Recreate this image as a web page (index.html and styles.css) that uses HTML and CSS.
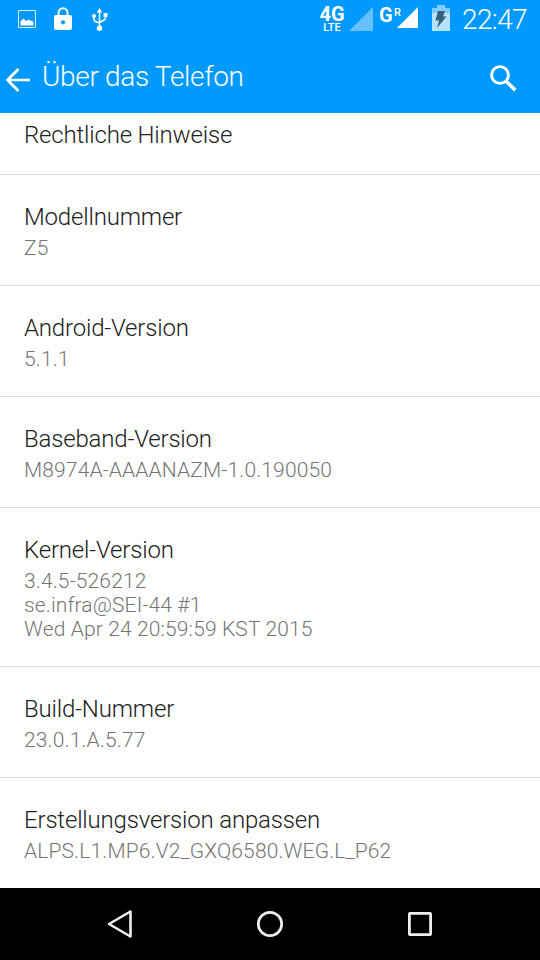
FILE: index.html
```html
<!doctype html>
<html lang="de">
<head>
<meta charset="utf-8">
<title>Über das Telefon</title>
<link rel="stylesheet" href="styles.css">
</head>

<body>
<div class="phone">
    <div class="status">
        <svg class="st-pic" width="18" height="18" viewBox="0 0 18 18">
            <path d="M.5.5h17v17H.5z" fill="none" stroke="#d9f0ff"/>
            <path d="M2.500 15.500v-4L5.500 8.500l2.500 2.500 3-1.500 1.500 1.500 1.500-.5 1.500 2v3z" fill="#fff"/>
        </svg>
        <svg class="st-lock" width="18" height="24" viewBox="0 0 18 24">
            <path d="M4.500 9V6a4.500 4.800 0 0 1 9 0v3" fill="none" stroke="#fff" stroke-width="2"/>
            <path d="M2 8h14q2 0 2 2v11q0 2-2 2H2q-2 0-2-2V10q0-2 2-2zm7 5.200a2.100 2.100 0 1 0 0 4.200 2.100 2.100 0 0 0 0-4.200z" fill="#fff"/>
        </svg>
        <svg class="st-usb" width="16" height="24" viewBox="0 0 16 24">
            <path d="M7.500 20V3M2 8v3.500q0 1.500 1.500 2l4 1.500M13.500 7v3q0 1.500-1.500 2l-4.500 2.500" fill="none" stroke="#fff" stroke-width="1.500"/>
            <path d="M7.500 0l2.800 4.500H4.700zM11.500 5h4v4h-4z" fill="#fff"/>
            <circle cx="2" cy="8" r="2" fill="#fff"/>
            <circle cx="7.500" cy="20.300" r="2.700" fill="#fff"/>
        </svg>
        <div class="net"><b>4G</b><span>LTE</span></div>
        <svg class="sig" width="24" height="24" viewBox="0 0 24 24"><path d="M24 0v24H0z" fill="#66c2ff"/></svg>
        <div class="gsm"><b>G</b><sup>R</sup></div>
        <svg class="sig2" width="21" height="21" viewBox="0 0 21 21"><path d="M21 0v21H0z" fill="#fff"/></svg>
        <svg class="bat" width="18" height="26" viewBox="0 0 18 26">
            <path d="M0 3h5V0h8v3h5v23H0z" fill="#80ccff"/>
            <path d="M0 8h18v18H0z" fill="#b8e2fb"/>
            <path d="M6 6h7l-2 5.500h3.500L5 23l2-7.500H3.500z" fill="#35617f"/>
        </svg>
        <div class="clock">22:47</div>
    </div>
    <div class="bar">
        <svg class="back" width="24" height="24" viewBox="0 0 24 24"><path d="M24 12H2M12.500 1L1.500 12l11 11" fill="none" stroke="#fff" stroke-width="2.700"/></svg>
        <h1>Über das Telefon</h1>
        <svg class="search" width="27" height="27" viewBox="0 0 27 27">
            <circle cx="10" cy="10" r="8.400" fill="none" stroke="#fff" stroke-width="2.900"/>
            <path d="M16 16l9.300 9.300" stroke="#fff" stroke-width="3.500"/>
        </svg>
    </div>
    <ul class="list">
        <li class="first"><h2>Rechtliche Hinweise</h2></li>
        <li><h2>Modellnummer</h2><p>Z5</p></li>
        <li><h2>Android-Version</h2><p>5.1.1</p></li>
        <li><h2>Baseband-Version</h2><p>M8974A-AAAANAZM-1.0.190050</p></li>
        <li><h2>Kernel-Version</h2><p>3.4.5-526212<br>se.infra@SEI-44 #1<br>Wed Apr 24 20:59:59 KST 2015</p></li>
        <li><h2>Build-Nummer</h2><p>23.0.1.A.5.77</p></li>
        <li><h2>Erstellungsversion anpassen</h2><p>ALPS.L1.MP6.V2_GXQ6580.WEG.L_P62</p></li>
    </ul>
    <div class="nav">
        <svg width="28" height="30" viewBox="0 0 28 30"><path d="M24.500 2.500v25L3 15z" fill="none" stroke="#eee" stroke-width="2.600" stroke-linejoin="round"/></svg>
        <svg width="28" height="28" viewBox="0 0 28 28"><circle cx="14" cy="14" r="11.700" fill="none" stroke="#eee" stroke-width="2.700"/></svg>
        <svg width="28" height="28" viewBox="0 0 28 28"><rect x="3.400" y="3.400" width="21.200" height="21.200" rx=".5" fill="none" stroke="#eee" stroke-width="2.800" stroke-linejoin="round"/></svg>
    </div>
</div>
</body>
</html>
```
FILE: styles.css
```css
body {
    margin: 0;
    font-family: Roboto, sans-serif;
    font-weight: 300;
}
h1, h2, p, ul {
    margin: 0;
    padding: 0;
    font-weight: 300;
}
svg {
    display: block;
    flex: none;
}
.phone {
    width: 540px;
    height: 960px;
    display: flex;
    flex-direction: column;
    overflow: hidden;
    background: #fff;
}
/* status bar */
.status {
    height: 38px;
    display: flex;
    align-items: flex-start;
    background: #09f;
    color: #fff;
}
.st-pic {
    margin: 10px 0 0 18px;
}
.st-lock {
    margin: 7px 0 0 18px;
}
.st-usb {
    margin: 8px 0 0 20px;
}
.net {
    width: 28px;
    margin: 5px 0 0 210px;
    text-align: center;
}
.net b {
    display: block;
    font-size: 20px;
    line-height: 18px;
    font-weight: 700;
}
.net span {
    display: block;
    font-size: 11px;
    line-height: 9px;
    font-weight: 500;
}
.sig {
    margin: 7px 0 0 3px;
}
.gsm {
    display: flex;
    width: 24px;
    margin: 6px 0 0 6px;
}
.gsm b {
    width: 15px;
    font-size: 20px;
    line-height: 18px;
    font-weight: 700;
}
.gsm sup {
    font-size: 11px;
    line-height: 13px;
    font-weight: 500;
}
.sig2 {
    margin: 7px 0 0 -6px;
}
.bat {
    margin: 5px 0 0 14px;
}
.clock {
    margin-left: 12px;
    font-size: 28px;
    line-height: 39px;
    letter-spacing: -.6px;
}
/* action bar */
.bar {
    height: 75px;
    display: flex;
    align-items: flex-start;
    background: #09f;
    color: #fff;
}
.back {
    margin: 30px 0 0 6px;
}
.bar h1 {
    flex: 1;
    margin-left: 12px;
    font-size: 28px;
    line-height: 77px;
    letter-spacing: -.32px;
}
.search {
    margin: 27px 23px 0 0;
}
.list {
    flex: 1;
    list-style: none;
}
.list li {
    padding: 26px 24px 25px;
    border-bottom: 1px solid #ddd;
}
.list li.first {
    height: 61px;
    padding: 0 24px;
}
.list li.first h2 {
    line-height: 45px;
}
.list li:last-child {
    border-bottom: 0;
}
.list h2 {
    color: #212121;
    font-size: 24px;
    line-height: 32px;
    padding-bottom: 3px;
    letter-spacing: -.18px;
}
.list p {
    color: #757575;
    font-size: 21px;
    line-height: 24px;
    letter-spacing: .13px;
}
/* navigation keys */
.nav {
    height: 72px;
    display: flex;
    align-items: center;
    justify-content: space-between;
    padding: 0 106px;
    background: #000;
}
```
